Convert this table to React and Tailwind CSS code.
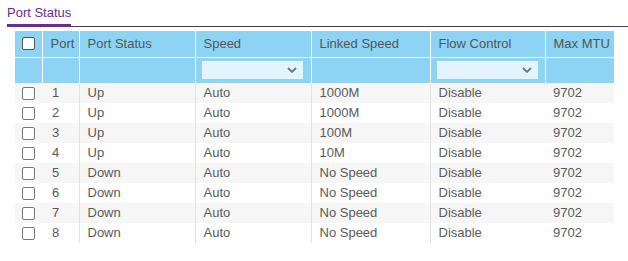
import React from 'react';

const ports = [
  { port: 1, status: 'Up', speed: 'Auto', linked: '1000M', flow: 'Disable', mtu: 9702 },
  { port: 2, status: 'Up', speed: 'Auto', linked: '1000M', flow: 'Disable', mtu: 9702 },
  { port: 3, status: 'Up', speed: 'Auto', linked: '100M', flow: 'Disable', mtu: 9702 },
  { port: 4, status: 'Up', speed: 'Auto', linked: '10M', flow: 'Disable', mtu: 9702 },
  { port: 5, status: 'Down', speed: 'Auto', linked: 'No Speed', flow: 'Disable', mtu: 9702 },
  { port: 6, status: 'Down', speed: 'Auto', linked: 'No Speed', flow: 'Disable', mtu: 9702 },
  { port: 7, status: 'Down', speed: 'Auto', linked: 'No Speed', flow: 'Disable', mtu: 9702 },
  { port: 8, status: 'Down', speed: 'Auto', linked: 'No Speed', flow: 'Disable', mtu: 9702 },
];

function Box({ head }) {
  return (
    <span
      className={`block w-[13px] h-[13px] rounded-[2px] border ${
        head ? 'bg-white border-[#555]' : 'bg-white border-[#777]'
      }`}
    />
  );
}

function Filter() {
  return (
    <div className="flex items-center justify-between w-[101px] h-[18px] bg-[#e3f4fc] pl-2 pr-[6px]">
      <span />
      <svg width="10" height="6" viewBox="0 0 10 6">
        <path d="M1 1 L5 5 L9 1" fill="none" stroke="#6b7b86" strokeWidth="1.8" />
      </svg>
    </div>
  );
}

export default function App() {
  const th = 'h-[26px] p-0 pl-2 text-left font-normal border-l border-white';
  return (
    <div className="bg-white w-[628px] h-[261px] text-[13px] text-[#5a5a5a] font-['Liberation_Sans',Arial,sans-serif]">
      <div className="pl-[7px] pt-[3px]">
        <div className="border-b border-[#4b3a55]">
          <div className="inline-block text-[#6b2c91] leading-[16px] pb-[3px] border-b-[3px] border-[#6b2c91] -mb-px">
            Port Status
          </div>
        </div>
      </div>
      <table className="ml-[15px] mt-[4px] border-collapse table-fixed w-[599px]">
        <colgroup>
          <col className="w-[27px]" />
          <col className="w-[37px]" />
          <col className="w-[116px]" />
          <col className="w-[116px]" />
          <col className="w-[119px]" />
          <col className="w-[115px]" />
          <col className="w-[69px]" />
        </colgroup>
        <thead className="bg-[#8dd3f4] text-[#555]">
          <tr className="border-b border-white">
            <th className="h-[26px] p-0 pl-[7px] text-left"><Box head /></th>
            <th className={th}>Port</th>
            <th className={th}>Port Status</th>
            <th className={th}>Speed</th>
            <th className={th}>Linked Speed</th>
            <th className={th}>Flow Control</th>
            <th className={th}>Max MTU</th>
          </tr>
          <tr>
            <td className="h-[26px] p-0" />
            <td className="h-[26px] p-0 border-l border-white" />
            <td className="h-[26px] p-0 border-l border-white" />
            <td className="h-[26px] p-0 pl-[6px] border-l border-white"><Filter /></td>
            <td className="h-[26px] p-0 border-l border-white" />
            <td className="h-[26px] p-0 pl-[6px] border-l border-white"><Filter /></td>
            <td className="h-[26px] p-0 border-l border-white" />
          </tr>
        </thead>
        <tbody>
          {ports.map((p, i) => (
            <tr key={p.port} className={i % 2 === 0 ? 'bg-[#f6f6f6]' : 'bg-white'}>
              <td className="h-5 p-0 pl-[7px]"><Box /></td>
              <td className="h-5 p-0 pl-[10px]">{p.port}</td>
              <td className="h-5 p-0 pl-2 border-l border-[#e2e2e2]">{p.status}</td>
              <td className="h-5 p-0 pl-2 border-l border-[#e2e2e2]">{p.speed}</td>
              <td className="h-5 p-0 pl-2 border-l border-[#e2e2e2]">{p.linked}</td>
              <td className="h-5 p-0 pl-2 border-l border-[#e2e2e2]">{p.flow}</td>
              <td className="h-5 p-0 pl-2">{p.mtu}</td>
            </tr>
          ))}
        </tbody>
      </table>
    </div>
  );
}
